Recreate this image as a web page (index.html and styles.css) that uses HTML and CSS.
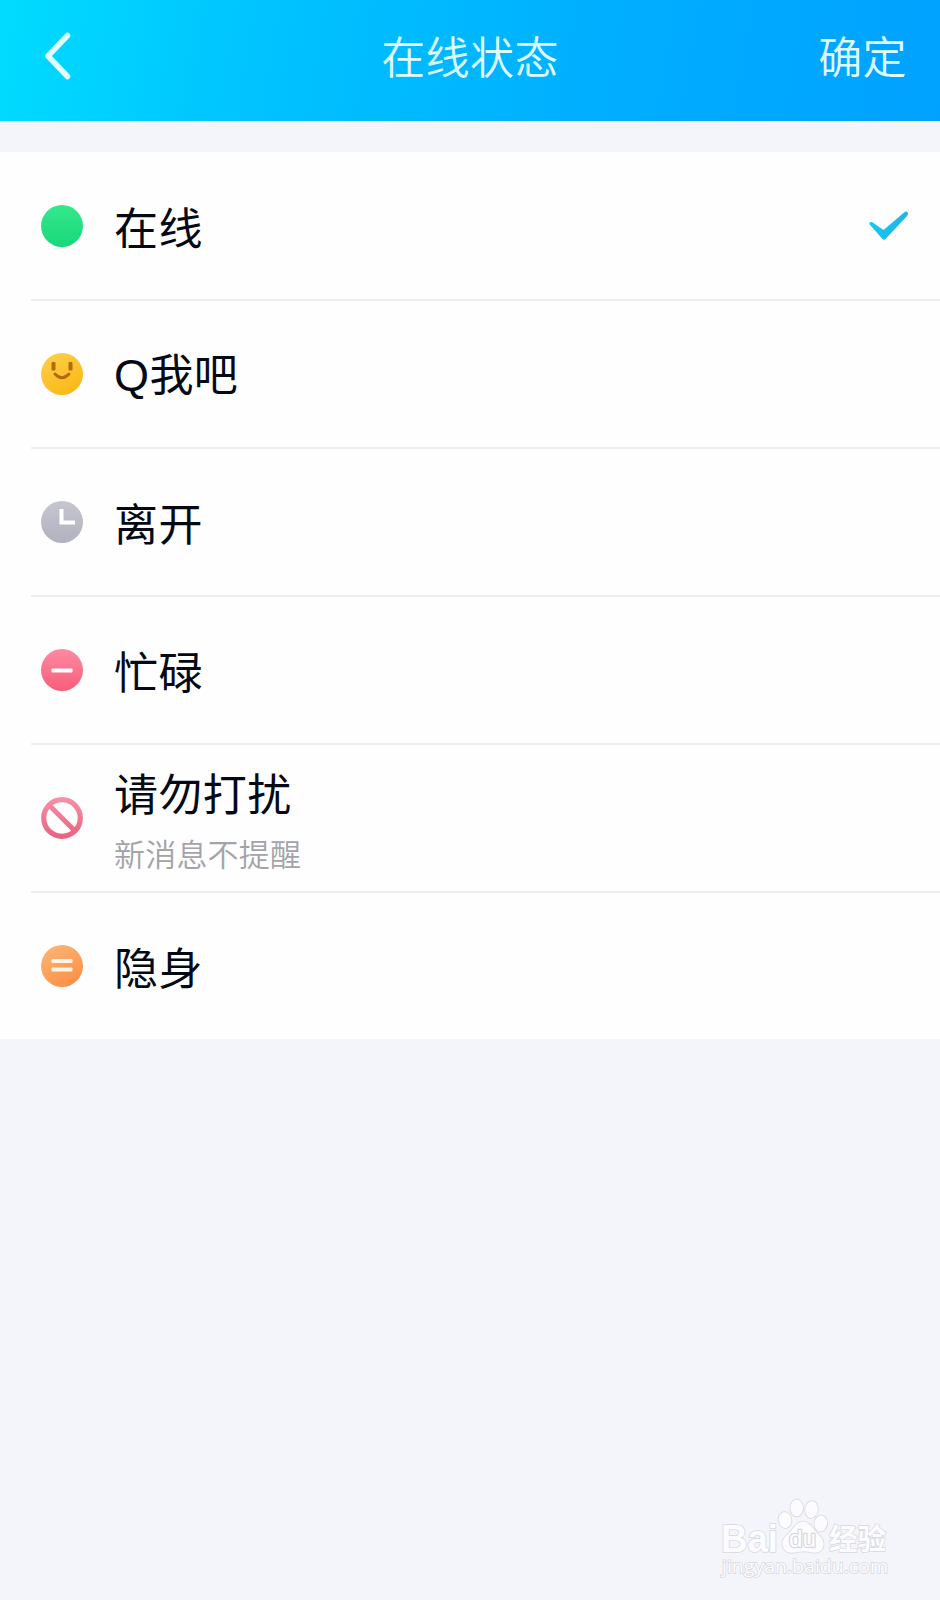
FILE: index.html
```html
<!DOCTYPE html>
<html lang="zh-CN">
<head>
  <meta charset="UTF-8">
  <meta name="viewport" content="width=device-width, initial-scale=1.0">
  <title>在线状态</title>
  <link rel="stylesheet" href="styles.css">
</head>
<body>
  <header class="header">
    <button class="back" aria-label="返回">
      <svg width="30" height="52" viewBox="0 0 30 52">
        <path d="M25.5 6.5 L6 27 L25.5 47.5" fill="none" stroke="#e2fdff" stroke-width="5.5" stroke-linecap="round" stroke-linejoin="round"/>
      </svg>
    </button>
    <h1>在线状态</h1>
    <button class="confirm">确定</button>
  </header>

  <ul class="status-list">
    <li class="status-item">
      <span class="icon online"></span>
      <div class="label">在线</div>
      <svg class="check" width="42" height="32" viewBox="0 0 42 32">
        <defs>
          <linearGradient id="checkFill" x1="0" y1="0" x2="1" y2="0">
            <stop offset="0" stop-color="#12c8f2"/>
            <stop offset="1" stop-color="#22b4e4"/>
          </linearGradient>
        </defs>
        <path d="M1.2 14 Q1.5 11.5 4 12 L15.5 20 L37 1.8 Q39.5 0.8 40 3.5 L39.5 5.5 L17.5 29 Q16 30.5 14.5 29 Z" fill="url(#checkFill)"/>
      </svg>
    </li>
    <li class="status-item">
      <span class="icon qme">
        <svg width="42" height="42" viewBox="0 0 42 42">
          <rect x="10.5" y="9" width="4" height="8.5" rx="1" fill="#b36a08"/>
          <rect x="27.5" y="9" width="4" height="8.5" rx="1" fill="#b36a08"/>
          <path d="M14 21 Q21 28.5 28 21" fill="none" stroke="#b36a08" stroke-width="3" stroke-linecap="round"/>
        </svg>
      </span>
      <div class="label"><span class="latin">Q</span>我吧</div>
    </li>
    <li class="status-item">
      <span class="icon away">
        <svg width="42" height="42" viewBox="0 0 42 42">
          <path d="M20.5 8 V21.5 H34" fill="none" stroke="#fff" stroke-width="4"/>
        </svg>
      </span>
      <div class="label">离开</div>
    </li>
    <li class="status-item">
      <span class="icon busy">
        <svg width="42" height="42" viewBox="0 0 42 42">
          <rect x="10.5" y="19.5" width="21" height="4" rx="1" fill="#fff"/>
        </svg>
      </span>
      <div class="label">忙碌</div>
    </li>
    <li class="status-item">
      <span class="icon">
        <svg width="42" height="42" viewBox="0 0 42 42">
          <defs>
            <linearGradient id="dndStroke" gradientUnits="userSpaceOnUse" x1="21" y1="0" x2="21" y2="42">
              <stop offset="0" stop-color="#f593a8"/>
              <stop offset="1" stop-color="#ec607e"/>
            </linearGradient>
          </defs>
          <g fill="none" stroke="url(#dndStroke)" stroke-width="5.2">
            <circle cx="21" cy="21" r="18.3"/>
            <path d="M8 8 L34 34"/>
          </g>
        </svg>
      </span>
      <div class="label with-note">请勿打扰<small>新消息不提醒</small></div>
    </li>
    <li class="status-item">
      <span class="icon invisible">
        <svg width="42" height="42" viewBox="0 0 42 42">
          <rect x="10.5" y="14" width="21" height="4" rx="1" fill="#fff3e4"/>
          <rect x="10.5" y="22.5" width="21" height="4" rx="1" fill="#fff3e4"/>
        </svg>
      </span>
      <div class="label">隐身</div>
    </li>
  </ul>

  <!-- Watermark -->
  <svg class="watermark" width="190" height="95" viewBox="0 0 190 95">
    <g class="mark">
      <text class="bai" x="6" y="61.5" textLength="57" lengthAdjust="spacingAndGlyphs">Bai</text>
      <ellipse cx="70" cy="30" rx="6.3" ry="8" transform="rotate(-8 70 30)"/>
      <ellipse cx="81.7" cy="18" rx="6.3" ry="8.5"/>
      <ellipse cx="96.5" cy="19.5" rx="6.3" ry="8.5" transform="rotate(8 96.5 19.5)"/>
      <ellipse cx="105.8" cy="33.5" rx="6.3" ry="8" transform="rotate(8 105.8 33.5)"/>
      <path d="M88 31.5 C94 31.5 97 37 101 42 C105 46.5 109 49 108.5 55 C108 61 103 63.5 98 62.5 C91 61 86 61 80 62.5 C73 64 68 60.5 67.5 54.5 C67 49 71 46 75 42 C79 37.5 82 31.5 88 31.5 Z"/>
      <text class="du" x="74" y="57" textLength="27" lengthAdjust="spacingAndGlyphs">du</text>
      <text class="jingyan" x="114" y="60" textLength="57" lengthAdjust="spacingAndGlyphs">经验</text>
    </g>
    <text class="mark url" x="7" y="83" textLength="166" lengthAdjust="spacingAndGlyphs">jingyan.baidu.com</text>
  </svg>
</body>
</html>
```

FILE: styles.css
```css
* {
  margin: 0;
  padding: 0;
  box-sizing: border-box;
}

body {
  position: relative;
  min-height: 1600px;
  background-color: #f4f5fa;
  font-family: "Noto Sans CJK SC", sans-serif;
  color: #050916;
}

.header {
  height: 121px;
  padding: 0 33px 12px 42px;
  display: grid;
  grid-template-columns: 1fr auto 1fr;
  align-items: center;
  background: linear-gradient(100deg, #00dcff 0%, #00c3ff 28%, #00aeff 65%, #00a2ff 100%);
}

.header h1,
.confirm {
  font-size: 44px;
  font-weight: 350;
  line-height: 60px;
  letter-spacing: 0.4px;
  color: #dcfcff;
}

.header h1 {
  margin-right: 9px;
}

button {
  border: none;
  background: none;
  font-family: inherit;
}

.back {
  justify-self: start;
  height: 52px;
}

.confirm {
  justify-self: end;
}

.status-list {
  margin-top: 31px;
  padding-top: 1px;
  list-style: none;
  background-color: #fefefe;
}

.status-item {
  height: 148px;
  margin-left: 31px;
  padding: 0 30px 0 10px;
  display: flex;
  align-items: center;
  border-bottom: 2px solid #eeeef2;
}

.status-item:last-child {
  height: 146px;
  border-bottom: none;
}

.icon {
  width: 42px;
  height: 42px;
  margin-right: 31px;
  border-radius: 50%;
}

.icon svg {
  display: block;
}

.online {
  background: linear-gradient(#35e88c, #17d87b);
}

.qme {
  background: linear-gradient(150deg, #fdd050, #fab50c);
}

.away {
  background: linear-gradient(#c6c6d0, #b2b2c0);
}

.busy {
  background: linear-gradient(#fb8ba0, #fa5c79);
}

.invisible {
  background: linear-gradient(150deg, #fcb878, #fb8a40);
}

.label {
  flex: 1;
  font-size: 44px;
  font-weight: 400;
  line-height: 60px;
  letter-spacing: 0.4px;
}

.label .latin {
  font-family: "Liberation Sans", sans-serif;
  font-size: 45px;
}

.with-note {
  padding-top: 9px;
}

.label small {
  display: block;
  font-size: 31px;
  font-weight: 350;
  line-height: 62px;
  letter-spacing: 0.2px;
  color: #a3a3a8;
}

.watermark {
  position: absolute;
  left: 715px;
  top: 1490px;
}

.mark {
  fill: #fcfcfe;
  stroke: #d8d8de;
  stroke-width: 1.6px;
  paint-order: stroke;
}

.bai,
.du {
  font-family: "Liberation Sans", sans-serif;
  font-weight: bold;
}

.bai {
  font-size: 38px;
}

.du {
  font-size: 24px;
  font-weight: normal;
  stroke-width: 2.5px;
}

.jingyan {
  font-size: 29px;
  font-weight: 700;
}

.url {
  font-family: "Open Sans", sans-serif;
  font-size: 19px;
}
```
